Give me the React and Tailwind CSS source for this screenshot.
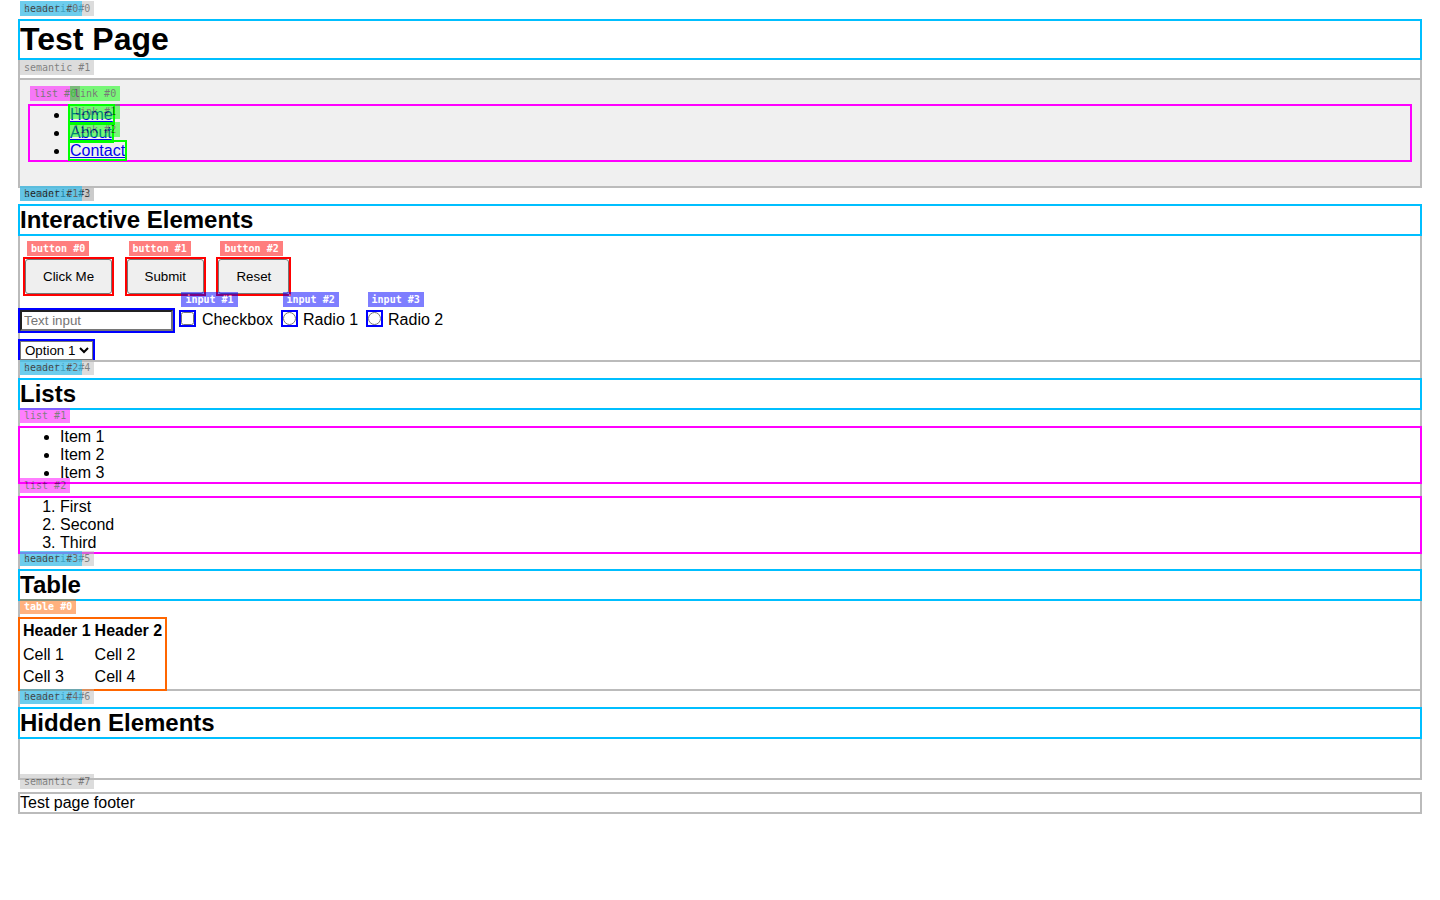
const TAG_COLORS = {
  semantic: "bg-[#bbbbbb] text-black font-normal",
  header: "bg-[#00bfff] text-black font-normal",
  list: "bg-[#ff00ff] text-black font-normal",
  link: "bg-[#00ff00] text-black font-normal",
  button: "bg-[#ff0000] text-white font-bold",
  input: "bg-[#0000ff] text-white font-bold",
  table: "bg-[#ff6600] text-white font-bold",
};

function Tag({ kind, n, place = "left-0 -top-5" }) {
  return (
    <span
      aria-hidden="true"
      className={`pointer-events-none absolute ${place} h-[15px] px-1 font-['DejaVu_Sans_Mono',monospace] text-[10px] leading-[15px] whitespace-nowrap opacity-50 ${TAG_COLORS[kind]}`}
    >
      {kind} #{n}
    </span>
  );
}

function Heading({ n, children }) {
  return (
    <div className="relative mb-5 outline-2 outline-[#00bfff]">
      <h2 className="text-2xl leading-7 font-bold">{children}</h2>
      <Tag kind="header" n={n} />
    </div>
  );
}

function Section({ n, className = "", children }) {
  return (
    <section className={`relative outline-2 outline-[#bbbbbb] ${className}`}>
      <Tag kind="semantic" n={n} />
      {children}
    </section>
  );
}

function PushButton({ n, type = "button", children }) {
  return (
    <div className="relative m-[5px] inline-block align-top outline-2 outline-[#ff0000]">
      <button
        type={type}
        className="block rounded-[3px] border border-[#767676] bg-[#efefef] px-[17px] py-[9px] text-[13.3333px] leading-[15px]"
      >
        {children}
      </button>
      <Tag kind="button" n={n} place="left-0.5 -top-[18px]" />
    </div>
  );
}

function Choice({ n, type, id, name, margin }) {
  return (
    <span className={`relative inline-flex outline-2 outline-[#0000ff] ${margin}`}>
      <input type={type} id={id} name={name} className="size-[13px]" />
      <Tag kind="input" n={n} />
    </span>
  );
}

const LINKS = ["Home", "About", "Contact"];
const ITEMS = ["Item 1", "Item 2", "Item 3"];
const STEPS = ["First", "Second", "Third"];
const ROWS = [
  ["Cell 1", "Cell 2"],
  ["Cell 3", "Cell 4"],
];

export default function App() {
  return (
    <div className="bg-white px-5 pt-[21px] pb-5 font-['Liberation_Sans',Arial,sans-serif] text-base leading-[18px] text-black">
      <header className="relative outline-2 outline-[#bbbbbb]">
        <Tag kind="semantic" n={0} />
        <div className="relative mb-[22px] outline-2 outline-[#00bfff]">
          <h1 className="text-[32px] leading-[37px] font-bold">Test Page</h1>
          <Tag kind="header" n={0} />
        </div>
        <nav className="relative bg-[#f0f0f0] px-2.5 py-[26px] outline-2 outline-[#bbbbbb]">
          <Tag kind="semantic" n={1} />
          <div className="relative outline-2 outline-[#ff00ff]">
            <Tag kind="list" n={0} />
            <ul className="list-disc pl-10">
              {LINKS.map((text, i) => (
                <li key={text}>
                  <span className="relative outline-2 outline-[#00ff00]">
                    <a href="#" className="text-[#0000ee] underline">
                      {text}
                    </a>
                    <Tag kind="link" n={i} />
                  </span>
                </li>
              ))}
            </ul>
          </div>
        </nav>
      </header>

      <main className="relative mt-5 outline-2 outline-[#bbbbbb]">
        <Tag kind="semantic" n={2} />
        <Section n={3}>
          <Heading n={1}>Interactive Elements</Heading>
          <div>
            <PushButton n={0}>Click Me</PushButton>{" "}
            <PushButton n={1} type="submit">
              Submit
            </PushButton>{" "}
            <PushButton n={2} type="reset">
              Reset
            </PushButton>
          </div>
          <div className="mt-2.5 leading-[21px]">
            <input
              type="text"
              aria-label="Text input"
              placeholder="Text input"
              className="relative h-[21px] w-[153px] border-2 border-[#767676] px-0.5 py-px text-[13.3333px] leading-[15px] outline-2 outline-[#0000ff] [border-style:inset] placeholder:text-[#757575]"
            />{" "}
            <Choice n={1} type="checkbox" id="check" name="check" margin="mr-[3px] ml-1" />{" "}
            <label htmlFor="check">Checkbox</label>{" "}
            <Choice n={2} type="radio" id="radio1" name="radio" margin="mr-[3px] ml-[5px]" />{" "}
            <label htmlFor="radio1">Radio 1</label>{" "}
            <Choice n={3} type="radio" id="radio2" name="radio" margin="mr-[3px] ml-[5px]" />{" "}
            <label htmlFor="radio2">Radio 2</label>
          </div>
          <select
            aria-label="Option"
            className="relative mt-2.5 block h-[19px] w-[73px] border border-[#767676] bg-white text-[13.3333px] outline-2 outline-[#0000ff] [clip-path:inset(-2px_-2px_0_-2px)]"
          >
            <option>Option 1</option>
            <option>Option 2</option>
          </select>
        </Section>

        <Section n={4} className="mt-5">
          <Heading n={2}>Lists</Heading>
          <div className="relative outline-2 outline-[#ff00ff]">
            <ul className="list-disc pl-10">
              {ITEMS.map((text) => (
                <li key={text}>{text}</li>
              ))}
            </ul>
            <Tag kind="list" n={1} />
          </div>
          <div className="relative mt-4 outline-2 outline-[#ff00ff]">
            <ol className="list-decimal pl-10">
              {STEPS.map((text) => (
                <li key={text}>{text}</li>
              ))}
            </ol>
            <Tag kind="list" n={2} />
          </div>
        </Section>

        <Section n={5} className="mt-[19px]">
          <Heading n={3}>Table</Heading>
          <div className="relative w-fit outline-2 outline-[#ff6600]">
            <table className="border-separate border-spacing-0.5">
              <thead>
                <tr>
                  <th className="px-px pt-px pb-[3px] font-bold">Header 1</th>
                  <th className="px-px pt-px pb-[3px] font-bold">Header 2</th>
                </tr>
              </thead>
              <tbody>
                {ROWS.map((row) => (
                  <tr key={row[0]}>
                    {row.map((cell) => (
                      <td key={cell} className="p-px">
                        {cell}
                      </td>
                    ))}
                  </tr>
                ))}
              </tbody>
            </table>
            <Tag kind="table" n={0} />
          </div>
        </Section>

        <Section n={6} className="mt-5 pb-[21px]">
          <Heading n={4}>Hidden Elements</Heading>
        </Section>
      </main>

      <footer className="relative mt-4 outline-2 outline-[#bbbbbb]">
        Test page footer
        <Tag kind="semantic" n={7} />
      </footer>
    </div>
  );
}
